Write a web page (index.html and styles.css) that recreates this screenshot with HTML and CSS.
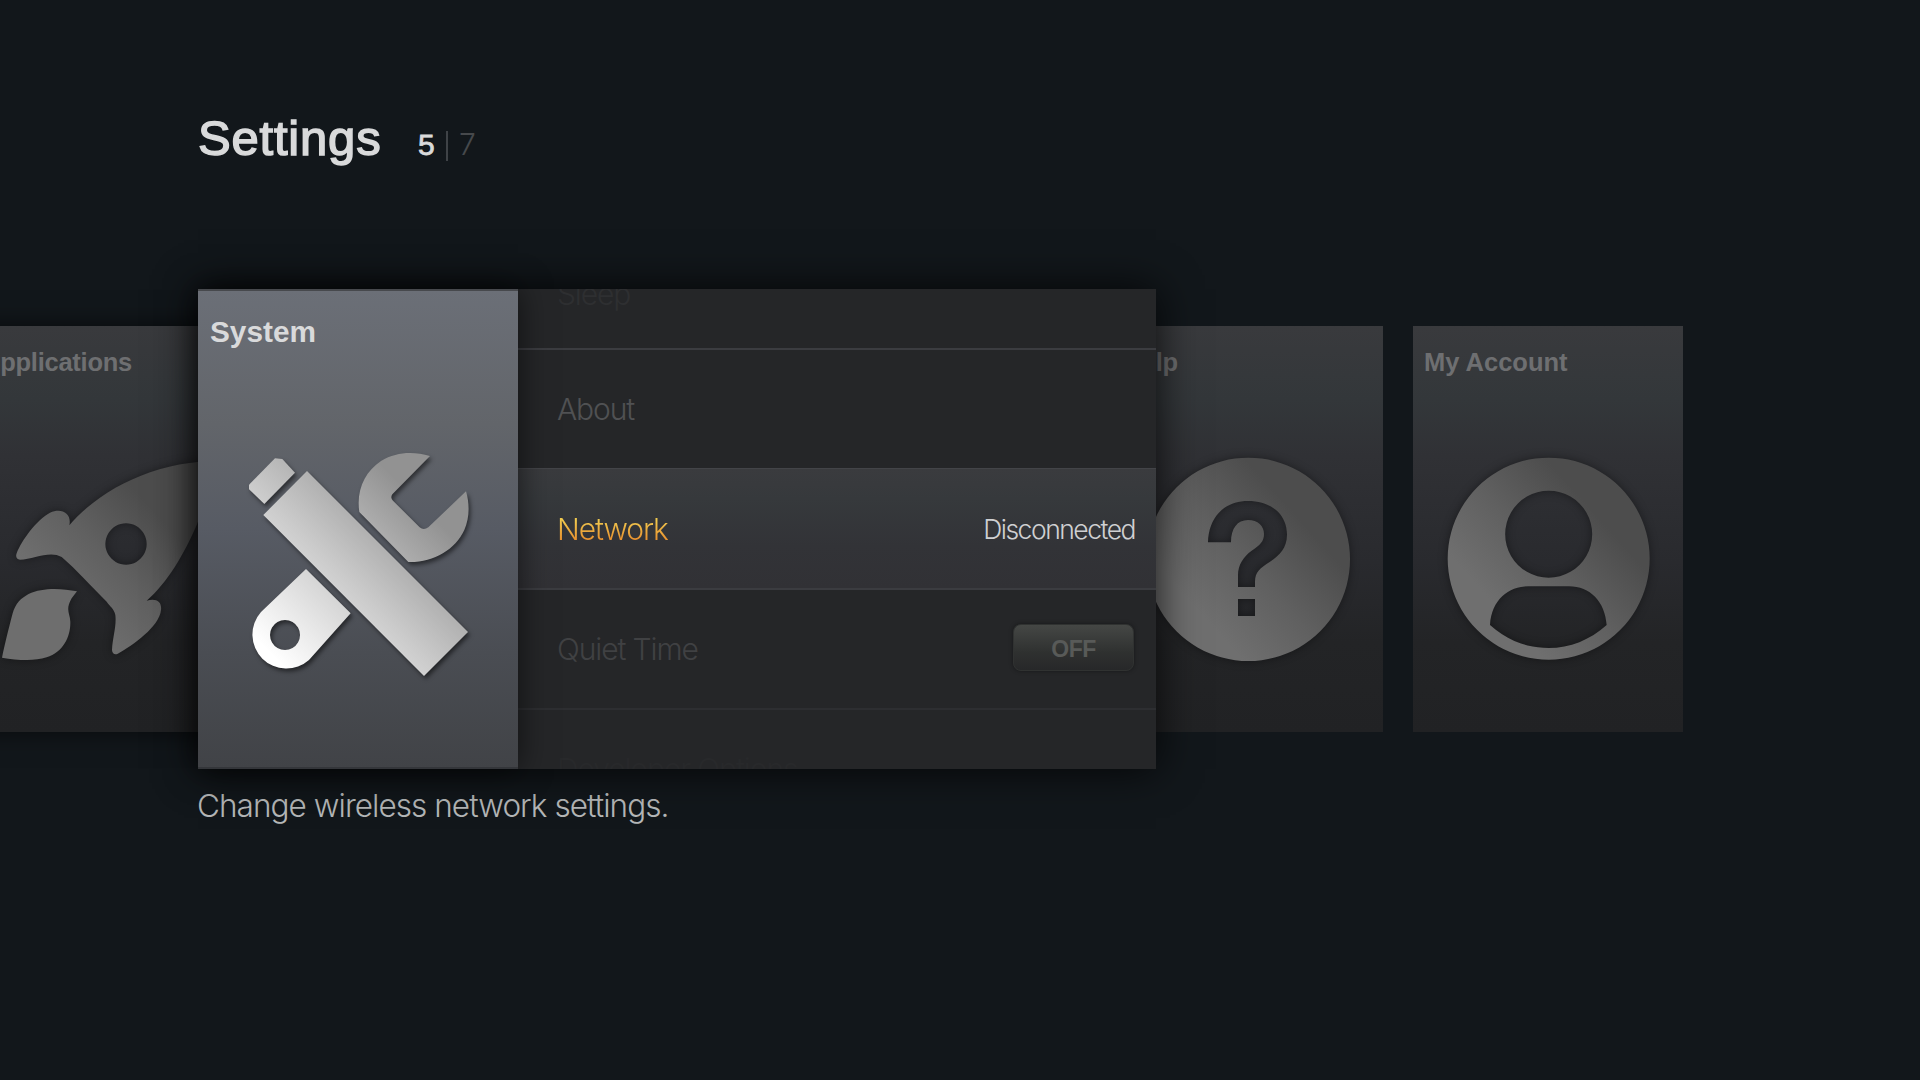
FILE: index.html
```html
<!DOCTYPE html>
<html lang="en">
<head>
<meta charset="utf-8">
<title>Settings</title>
<link rel="stylesheet" href="styles.css">
</head>
<body>
<svg class="defs" width="0" height="0" aria-hidden="true">
  <defs>
    <linearGradient id="dim" x1="0.25" y1="0.75" x2="0.75" y2="0.3">
      <stop offset="0" stop-color="#6f6f6f"/><stop offset="0.5" stop-color="#606060"/><stop offset="1" stop-color="#4d4d4d"/>
    </linearGradient>
    <linearGradient id="steel" gradientUnits="userSpaceOnUse" x1="130" y1="680" x2="580" y2="230">
      <stop offset="0" stop-color="#ffffff"/><stop offset="0.5" stop-color="#cbcbcb"/><stop offset="1" stop-color="#929292"/>
    </linearGradient>
  </defs>
</svg>
<main class="screen">
  <header class="header">
    <h1 class="title">Settings</h1>
    <div class="count"><span class="current">5</span><span class="bar"></span><span class="total">7</span></div>
  </header>

  <section class="carousel">
    <article class="card card-apps">
      <h2 class="card-title">Applications</h2>
      <svg class="card-icon" viewBox="-87 378 810 750">
        <path fill="url(#dim)" fill-rule="evenodd" d="M208 676C290 580 430 500 600 485L628 482C625 540 612 620 594 665C555 760 500 850 440 902C470 894 486 905 483 930C478 980 400 1035 352 1062C342 1065 336 1058 336 1050C338 1010 350 980 346 945C342 925 330 920 320 905C270 855 230 810 185 771C150 750 100 778 60 779C50 779 46 770 50 760C65 720 110 660 150 638C185 622 216 640 208 676ZM378 670a62 62 0 1 0 0.1 0Z"/>
        <path fill="#6e6e6e" d="M231 874C160 860 60 860 38 940C25 990 15 1030 6 1073C50 1080 100 1085 140 1072C190 1055 212 1010 211 965C210 940 195 930 215 895Z"/>
      </svg>
    </article>

    <article class="hero">
      <div class="hero-card">
        <h2 class="hero-title">System</h2>
        <svg class="hero-icon" viewBox="0 0 780 780">
          <g fill="url(#steel)">
            <path d="M135 85L157 87L195 128L103 222L57 178V164Z"/>
            <path d="M231 123L714 606L582 738L100 255Z"/>
            <path d="M600 78L487 193Q480 203 489 212L569 292Q581 302 595 292L708 184C720 225 718 265 703 300C675 360 610 398 535 396L388 246C378 180 405 125 453 93C500 65 550 64 600 78Z"/>
            <path fill-rule="evenodd" d="M228 417L362 550L237 690A102 102 0 0 1 93 546ZM165 570a45 45 0 1 0 0.1 0Z"/>
          </g>
        </svg>
      </div>
      <ul class="menu">
        <li class="row row-faint"><span class="label">Sleep</span></li>
        <li class="row row-about"><span class="label">About</span></li>
        <li class="row row-active"><span class="label">Network</span><span class="value">Disconnected</span></li>
        <li class="row row-quiet"><span class="label">Quiet Time</span><span class="toggle">OFF</span></li>
        <li class="row row-last"><span class="label">Developer Options</span></li>
      </ul>
    </article>

    <article class="card card-help">
      <h2 class="card-title">Help</h2>
      <svg class="card-icon" viewBox="-51 348 810 750">
        <path fill="url(#dim)" fill-rule="evenodd" d="M355 443a305 305 0 1 0 0.1 0ZM234 697C236 625 280 573 354 573C425 573 472 615 471 675C470 715 450 735 420 755C390 775 375 785 375 815V831H324V795C324 765 340 740 365 722C390 705 402 695 402 672C402 648 384 630 354 630C322 630 303 655 303 697ZM324 867h51v51h-51Z"/>
      </svg>
    </article>

    <article class="card card-account">
      <h2 class="card-title">My Account</h2>
      <svg class="card-icon" viewBox="39 348 810 750">
        <path fill="url(#dim)" fill-rule="evenodd" d="M446 443a303 303 0 1 0 0.1 0ZM446 542a130.500 130.500 0 1 0 0.1 0ZM270 945C275 870 325 829 385 829H507C570 829 615 875 620 945C570 990 510 1014 446 1014C380 1014 320 990 270 945Z"/>
      </svg>
    </article>
  </section>

  <p class="hint">Change wireless network settings.</p>
</main>
</body>
</html>
```
FILE: styles.css
```css
* { box-sizing: border-box; margin: 0; padding: 0; }
body {
  background: #12171b;
  color: #d9dadb;
  font-family: "Liberation Sans", Arial, sans-serif;
  overflow: hidden;
}
.defs { display: block; height: 0; }
.screen { width: 1920px; height: 1080px; overflow: hidden; white-space: nowrap; }

.header { display: flex; height: 289px; padding: 108px 0 0 198px; }
.title {
  width: 220px;
  font-size: 49px;
  line-height: 60px;
  font-weight: 400;
  letter-spacing: 0.8px;
  -webkit-text-stroke: 1.5px #d9dadb;
}
.count { display: flex; padding-top: 18px; font-size: 30px; line-height: 38px; }
.current { width: 28px; -webkit-text-stroke: 0.8px #d9dadb; }
.bar { width: 2px; height: 30px; margin-top: 5px; background: #3f4347; }
.total { padding-left: 11px; color: #46494c; font-family: Inter, sans-serif; font-weight: 300; line-height: 37px; }

.carousel { display: flex; align-items: center; height: 480px; }
.card {
  flex: none;
  width: 270px;
  height: 406px;
  padding-top: 20px;
  background: linear-gradient(#393a3d 0%, #33373a 18%, #303135 32%, #292a2e 58%, #232426 78%, #212224 100%);
}
.card-apps { margin-left: -29px; box-shadow: 0 0 24px rgba(0, 0, 0, 0.6); }
.card-help { margin-left: -43px; }
.card-account { margin-left: 30px; }
.card-title {
  height: 80px;
  padding-left: 11px;
  color: #6e6f71;
  font-size: 25.500px;
  line-height: 32px;
  font-weight: 700;
}
.card-apps .card-title { letter-spacing: -0.25px; }
.card-help .card-title { letter-spacing: -0.4px; }
.card-icon { display: block; width: 270px; height: 250px; filter: drop-shadow(0 0 5px rgba(0, 0, 0, 0.4)); }

.hero {
  position: relative;
  z-index: 1;
  display: flex;
  flex: none;
  width: 958px;
  height: 480px;
  margin-left: -43px;
  box-shadow: 0 0 40px rgba(0, 0, 0, 0.8);
}
.hero-card {
  position: relative;
  z-index: 1;
  width: 320px;
  height: 480px;
  padding-top: 23px;
  border-top: 2px solid #47494d;
  border-bottom: 2px solid #34363a;
  background: linear-gradient(#6b6f77 0%, #62656a 28%, #575b64 50%, #4a4d53 76%, #414347 100%);
  box-shadow: 0 0 30px rgba(0, 0, 0, 0.6);
}
.hero-title { height: 116px; padding-left: 12px; font-size: 29.800px; line-height: 36px; font-weight: 700; }
.hero-icon { display: block; width: 260px; height: 260px; margin-left: 32px; filter: drop-shadow(2px 3px 2px rgba(0, 0, 0, 0.5)); }

.menu {
  display: flex;
  flex-direction: column;
  justify-content: center;
  width: 638px;
  height: 480px;
  padding-bottom: 2px;
  overflow: hidden;
  background: #252628;
  list-style: none;
  font-family: Inter, "Liberation Sans", sans-serif;
}
.row {
  display: flex;
  flex: none;
  align-items: center;
  justify-content: space-between;
  height: 120px;
  padding: 0 21px 0 39px;
  font-size: 30px;
  font-weight: 300;
  letter-spacing: -1.1px;
  border-top: 2px solid #3b3c40;
}
.row-faint { padding-top: 9px; color: #2e2f31; }
.row-about { color: #505153; }
.row-active { border-top: 1px solid #434448; background: linear-gradient(#3a3b3e, #36393c 25%, #323337 65%, #313135); }
.row-active .label { color: transparent; background: linear-gradient(#f0c94f 25%, #e8912f 80%); background-clip: text; -webkit-background-clip: text; }
.value { color: #cfd0d2; font-size: 26.500px; letter-spacing: -1.5px; }
.row-quiet { color: #404143; }
.row-last { border-top-color: #2d2e31; color: #28292b; }
.toggle {
  width: 121px;
  height: 47px;
  margin: 0 1px 3px 0;
  border: 1px solid #303231;
  border-radius: 8px;
  background: linear-gradient(#454745, #2f3130 60%, #272829);
  box-shadow: 0 0 4px rgba(0, 0, 0, 0.4);
  color: #585a58;
  font-family: "Liberation Sans", Arial, sans-serif;
  font-size: 23px;
  font-weight: 700;
  letter-spacing: -0.5px;
  line-height: 48px;
  text-align: center;
}
.hint {
  padding: 18px 0 0 197px;
  color: #b5b7b8;
  font-family: Inter, "Liberation Sans", sans-serif;
  font-size: 31.500px;
  line-height: 38px;
  font-weight: 300;
  letter-spacing: -0.95px;
}
```
